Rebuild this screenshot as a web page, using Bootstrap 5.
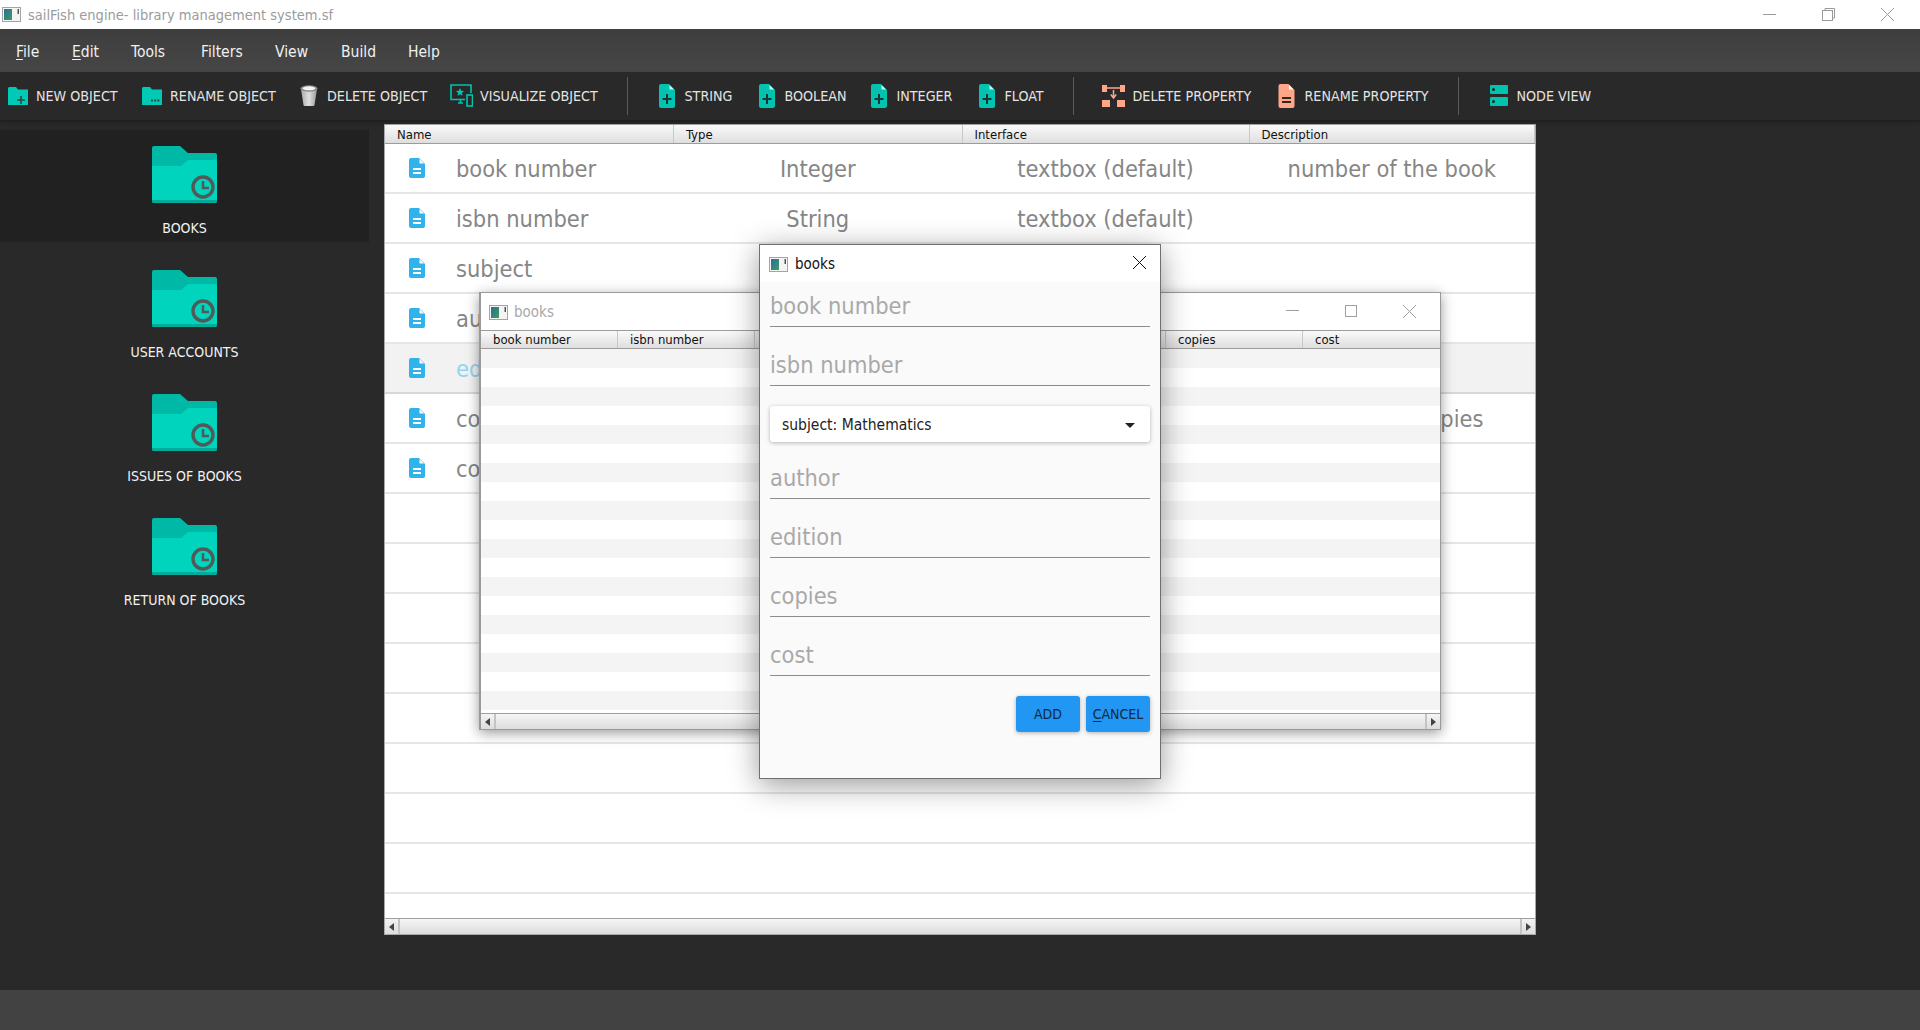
<!DOCTYPE html>
<html lang="en">
<head>
<meta charset="utf-8">
<title>sailFish engine</title>
<link href="https://cdn.jsdelivr.net/npm/bootstrap@5.3.0/dist/css/bootstrap.min.css" rel="stylesheet">
<style>
html,body{height:1030px;overflow:hidden}
body{position:relative;background:#292929;font-family:"DejaVu Sans","Liberation Sans",sans-serif;font-stretch:condensed;color:#e8e8e8}
input,button{font-stretch:condensed}
u{text-underline-offset:2px}
.titlebar{height:29px;background:#fff;color:#9b9b9b;font-size:14.5px;padding-left:2px}
.titlebar .ttl{margin-left:7px;padding-top:2px}
.winctl{margin-left:auto;padding-right:26px;gap:46px}
.menubar{height:43px;background:linear-gradient(#3e3e3e,#464646);font-size:15.5px;color:#f0f0f0;padding-top:5px}
.m1{margin-left:16px;width:56px}.m2{width:59px}.m3{width:70px}.m4{width:74px}.m5{width:66px}.m6{width:67px}
.toolbar{height:48px;background:#292929;font-size:14.2px;color:#e4e4e4;padding-left:8px;box-shadow:0 2px 3px #1e1e1e;position:relative}
.tool{white-space:nowrap;gap:8px;padding-top:2px}
.tool svg{margin-top:-2px}
.w134{width:134px}.w158{width:158px}.w150{width:150px}.w176{width:176.5px}
.w100{width:100px}.w112{width:112px}.w108{width:108px}.w94{width:94px}.w180{width:180px}.w176b{width:176px}
.g9{gap:9px}.g7{gap:7px}.g10{gap:10px}
.vsep{width:1px;height:38px;background:#5a5a5a}
.sp33{margin-right:31px}.sp29{margin-right:28px}.sp32{margin-right:31px}
.mainarea{height:870px}
.sidebar{width:384px;padding-top:10px}
.sideitem{width:369px;height:112px;margin-bottom:12px;padding-top:16px;font-size:14px;color:#f2f2f2}
.sideitem.on{background:#212121}
.sideitem svg{display:block}
.sideitem div{margin-top:15px}
.listpane{width:1152px;height:811px;margin-top:4px;background:#fff;border:1px solid #a8a8a8}
.tblwrap{flex:1 1 auto;overflow:hidden}
.listtbl{table-layout:fixed;width:100%;margin:0;--bs-table-bg:transparent}
.listtbl th{height:18px;padding:0 0 0 12px;font-weight:400;font-size:13px;line-height:17px;color:#111;background:linear-gradient(#fafafa,#dedede);border-bottom:1px solid #9c9c9c;border-right:1px solid #c8c8c8}
.listtbl td{height:50px;padding:3px 0 0;border-bottom:2px solid #e6e6e6;font-size:23.4px;color:#868686;text-align:center;vertical-align:middle;white-space:nowrap}
.listtbl td:first-child{text-align:left;padding-left:24px}
.listtbl td:first-child svg{margin-right:31px;vertical-align:-1px}
.listtbl tr.hov td{background:#f2f2f2;color:#93d5f0;border-bottom-color:#d8d8d8}
.c1{width:288.5px}.c2{width:288.5px}.c3{width:287px}
.hscroll{height:16px;flex:0 0 16px;background:linear-gradient(#f6f6f6,#dcdcdc);border-top:1px solid #9f9f9f}
.hbtn{width:15px;background:linear-gradient(#f4f4f4,#dddddd);border-right:2px solid #c4c4c4}
.hbtn.rt{border-right:0;border-left:2px solid #c4c4c4;margin-left:auto}
.arrL,.arrR{width:0;height:0;border-top:4px solid transparent;border-bottom:4px solid transparent}
.arrL{border-right:5px solid #444}.arrR{border-left:5px solid #444}
.subwin{position:absolute;left:479px;top:292px;width:962px;height:438px;background:#fff;border:1px solid #9a9a9a;border-left-width:2px;box-shadow:0 3px 12px rgba(0,0,0,.4)}
.subhead{height:37px;color:#a8a8a8;font-size:15px;padding:1px 0 0 8px;gap:6px}
.subctl{margin-left:auto;gap:46px;padding:0 24px 2px 0}
.gridhead{height:19px;border-top:1px solid #9c9c9c;border-bottom:1px solid #9c9c9c;background:linear-gradient(#fafafa,#dedede);font-size:13px;line-height:18px;color:#111}
.gridhead div{width:137.5px;padding-left:12px;border-right:1px solid #c8c8c8}
.gridbody{height:364px;background:repeating-linear-gradient(#f4f4f4 0,#f4f4f4 19px,#fff 19px,#fff 38px)}
.dlg{position:absolute;left:759px;top:244px;width:402px;height:535px;background:#fafafa;border:1px solid #6f6f6f;box-shadow:0 6px 28px rgba(0,0,0,.4);padding:0 10px}
.dlghead{height:37px;margin:0 -10px;background:#fff;color:#111;font-size:15px;padding:1px 14px 0 9px;gap:7px}
.dlgx{margin-bottom:3px}
.dlg .form-control{height:45px;padding:3px 0 0;border:0;border-bottom:1px solid #8c8c8c;border-radius:0;background:transparent;font-size:23.4px;color:#888;box-shadow:none}
.dlg .form-control::placeholder{color:#a9a9a9;opacity:1}
.mt14{margin-top:14px}.mt12{margin-top:12px}.mt20{margin-top:20px}
.combo{height:36px;width:100%;background:#fff;border:0;border-radius:3px;font-size:15.5px;color:#222;padding:3px 12px 0;box-shadow:0 1px 4px rgba(0,0,0,.28)}
.combo:hover,.combo:active{background:#fff;color:#222}
.combo::after{border-top-width:.36em;border-left-width:.36em;border-right-width:.36em;margin-right:3px}
.btnrow{gap:6px}
.btnmat{width:64px;height:36px;padding:1px 0 0;background:#2196f3;border:0;border-radius:3px;font-size:14px;color:#0e2a44;box-shadow:0 1px 4px rgba(0,0,0,.3)}
.statusbar{height:40px;background:#424242}
</style>
</head>
<body>
<svg width="0" height="0" class="d-block">
<defs>
<linearGradient id="gApp" x1="0" y1="0" x2="1" y2="1"><stop offset="0" stop-color="#2a6f9a"/><stop offset="1" stop-color="#3f9a5f"/></linearGradient>
<symbol id="appi" viewBox="0 0 19 15"><rect x=".5" y=".5" width="18" height="14" fill="#f4f4f4" stroke="#a4a4a4"/><rect x="2" y="2" width="8" height="11" fill="url(#gApp)"/><rect x="15.5" y="2" width="1.5" height="5" fill="#555"/></symbol>
<symbol id="fold" viewBox="0 0 65 57"><path d="M2 0H28L36 7H63a2 2 0 0 1 2 2V30H0V2a2 2 0 0 1 2-2z" fill="#00b8a6"/><path d="M0 20H29L36 14H63a2 2 0 0 1 2 2V55a2 2 0 0 1-2 2H2a2 2 0 0 1-2-2z" fill="#00d4bd"/><path d="M0 55a2 2 0 0 0 2 2H63a2 2 0 0 0 2-2V54H0z" fill="#00ab99"/><circle cx="51" cy="41" r="10" fill="none" stroke="#505a58" stroke-width="3.4"/><path d="M51 35V42H57" fill="none" stroke="#505a58" stroke-width="2.6"/></symbol>
<symbol id="doc" viewBox="0 0 16 20"><path d="M2 0H10L16 6V18a2 2 0 0 1-2 2H2a2 2 0 0 1-2-2V2a2 2 0 0 1 2-2z" fill="#2fb3ea"/><path d="M10.5 1V5.5H15z" fill="#fff"/><path d="M4 11H12M4 15H12" stroke="#fff" stroke-width="1.8"/></symbol>
<symbol id="docadd" viewBox="0 0 16 24"><path d="M2 0H10L16 6V22a2 2 0 0 1-2 2H2a2 2 0 0 1-2-2V2a2 2 0 0 1 2-2z" fill="#00c4b0"/><path d="M10.5 1V5.5H15z" fill="#bff"/><path d="M8 10V20M3.500 15H12.500" stroke="#1c3533" stroke-width="2"/></symbol>
<symbol id="folda" viewBox="0 0 20 18"><path d="M1 0H8L10 2.500H20V18H0V1z" fill="#00c9b5"/><path d="M13 9V17M9 13H17" stroke="#2a4a46" stroke-width="1.600"/></symbol>
<symbol id="foldr" viewBox="0 0 20 18"><path d="M1 0H8L10 2.500H20V18H0V1z" fill="#00c9b5"/><path d="M9 13.500h2M12.200 13.500h2M15.400 13.500h2" stroke="#2a4a46" stroke-width="1.800"/></symbol>
</defs>
</svg>

<header class="titlebar d-flex align-items-center">
  <svg width="19" height="15"><use href="#appi"/></svg>
  <span class="ttl">sailFish engine- library management system.sf</span>
  <div class="winctl d-flex align-items-center">
    <svg width="13" height="13"><path d="M0 6.500H13" stroke="#9a9a9a"/></svg>
    <svg width="13" height="13" fill="none" stroke="#9a9a9a"><path d="M3 2.500V.5H12.500V10H10.500"/><rect x=".5" y="2.500" width="10" height="10"/></svg>
    <svg width="13" height="13"><path d="M0 0L13 13M13 0L0 13" stroke="#9a9a9a"/></svg>
  </div>
</header>

<nav class="menubar d-flex align-items-center">
  <span class="m1"><u>F</u>ile</span><span class="m2"><u>E</u>dit</span><span class="m3">Tools</span><span class="m4">Filters</span><span class="m5">View</span><span class="m6">Build</span><span>Help</span>
</nav>

<div class="toolbar d-flex align-items-center">
  <div class="tool d-flex align-items-center w134"><svg width="20" height="18"><use href="#folda"/></svg>NEW OBJECT</div>
  <div class="tool d-flex align-items-center w158"><svg width="20" height="18"><use href="#foldr"/></svg>RENAME OBJECT</div>
  <div class="tool g9 d-flex align-items-center w150">
    <svg width="18" height="21" viewBox="0 0 18 21"><defs><linearGradient id="gT" x1="0" x2="1"><stop offset="0" stop-color="#aaa"/><stop offset=".5" stop-color="#e0e0e0"/><stop offset="1" stop-color="#999"/></linearGradient></defs><path d="M1 4L3.500 20a1.500 1 0 0 0 1.500 1H13a1.500 1 0 0 0 1.500-1L17 4z" fill="url(#gT)"/><ellipse cx="9" cy="3.500" rx="8.500" ry="3.200" fill="#8a8a8a"/><ellipse cx="9" cy="3.300" rx="6.500" ry="2" fill="#f4f4f4"/></svg>DELETE OBJECT</div>
  <div class="tool g7 d-flex align-items-center w176">
    <svg width="23" height="24" viewBox="0 0 23 24" fill="none" stroke="#00c4b0" stroke-width="1.600"><path d="M15 15.500H1V1H21V9"/><path d="M8 19H13M10.500 16V19"/><rect x="17" y="11" width="5.500" height="11"/><path d="M10 4l1.200 2.700 2.800.3-2.100 1.900.6 2.800-2.500-1.400-2.500 1.400.6-2.800L6 7l2.800-.3z" fill="#00c4b0" stroke="none"/></svg>VISUALIZE OBJECT</div>
  <div class="vsep sp33"></div>
  <div class="tool g10 d-flex align-items-center w100"><svg width="16" height="24"><use href="#docadd"/></svg>STRING</div>
  <div class="tool g10 d-flex align-items-center w112"><svg width="16" height="24"><use href="#docadd"/></svg>BOOLEAN</div>
  <div class="tool g10 d-flex align-items-center w108"><svg width="16" height="24"><use href="#docadd"/></svg>INTEGER</div>
  <div class="tool g10 d-flex align-items-center w94"><svg width="16" height="24"><use href="#docadd"/></svg>FLOAT</div>
  <div class="vsep sp29"></div>
  <div class="tool d-flex align-items-center w176b">
    <svg width="23" height="24" viewBox="0 0 23 24" fill="#ffa68a"><rect x="0" y="1" width="5" height="7"/><rect x="18" y="1" width="5" height="7"/><rect x="0" y="16" width="8" height="7"/><rect x="15" y="16" width="8" height="7"/><path d="M5 4H18" stroke="#ffa68a" stroke-width="1.500"/><path d="M11.500 6V13M8.800 10.500L11.500 14 14.200 10.500" fill="none" stroke="#ffa68a" stroke-width="1.500"/></svg>DELETE PROPERTY</div>
  <div class="tool g10 d-flex align-items-center w180">
    <svg width="17" height="24" viewBox="0 0 16 24"><path d="M2 0H10L16 6V22a2 2 0 0 1-2 2H2a2 2 0 0 1-2-2V2a2 2 0 0 1 2-2z" fill="#ffa68a"/><path d="M10.500 1V5.500H15z" fill="#ffe"/><path d="M3.500 14H12.500M3.500 18H12.500" stroke="#33261f" stroke-width="1.800"/></svg>RENAME PROPERTY</div>
  <div class="vsep sp32"></div>
  <div class="tool g9 d-flex align-items-center">
    <svg width="18" height="21" viewBox="0 0 18 21"><rect width="18" height="9" rx="1" fill="#00c4b0"/><rect y="12" width="18" height="9" rx="1" fill="#00c4b0"/><circle cx="3.500" cy="4.500" r="1.500" fill="#222"/><circle cx="3.500" cy="16.500" r="1.500" fill="#222"/></svg>NODE VIEW</div>
</div>

<main class="mainarea d-flex">
  <aside class="sidebar">
    <div class="sideitem on d-flex flex-column align-items-center"><svg width="65" height="57"><use href="#fold"/></svg><div>BOOKS</div></div>
    <div class="sideitem d-flex flex-column align-items-center"><svg width="65" height="57"><use href="#fold"/></svg><div>USER ACCOUNTS</div></div>
    <div class="sideitem d-flex flex-column align-items-center"><svg width="65" height="57"><use href="#fold"/></svg><div>ISSUES OF BOOKS</div></div>
    <div class="sideitem d-flex flex-column align-items-center"><svg width="65" height="57"><use href="#fold"/></svg><div>RETURN OF BOOKS</div></div>
  </aside>

  <section class="listpane d-flex flex-column">
    <div class="tblwrap">
      <table class="table listtbl">
        <thead><tr><th class="c1">Name</th><th class="c2">Type</th><th class="c3">Interface</th><th>Description</th></tr></thead>
        <tbody>
          <tr><td><svg width="16" height="20"><use href="#doc"/></svg>book number</td><td>Integer</td><td>textbox (default)</td><td>number of the book</td></tr>
          <tr><td><svg width="16" height="20"><use href="#doc"/></svg>isbn number</td><td>String</td><td>textbox (default)</td><td></td></tr>
          <tr><td><svg width="16" height="20"><use href="#doc"/></svg>subject</td><td></td><td></td><td></td></tr>
          <tr><td><svg width="16" height="20"><use href="#doc"/></svg>author</td><td></td><td></td><td></td></tr>
          <tr class="hov"><td><svg width="16" height="20"><use href="#doc"/></svg>edition</td><td></td><td></td><td></td></tr>
          <tr><td><svg width="16" height="20"><use href="#doc"/></svg>copies</td><td></td><td></td><td>number of copies</td></tr>
          <tr><td><svg width="16" height="20"><use href="#doc"/></svg>cost</td><td></td><td></td><td></td></tr>
          <tr><td></td><td></td><td></td><td></td></tr>
          <tr><td></td><td></td><td></td><td></td></tr>
          <tr><td></td><td></td><td></td><td></td></tr>
          <tr><td></td><td></td><td></td><td></td></tr>
          <tr><td></td><td></td><td></td><td></td></tr>
          <tr><td></td><td></td><td></td><td></td></tr>
          <tr><td></td><td></td><td></td><td></td></tr>
          <tr><td></td><td></td><td></td><td></td></tr>
          <tr><td></td><td></td><td></td><td></td></tr>
        </tbody>
      </table>
    </div>
    <div class="hscroll d-flex">
      <div class="hbtn d-flex align-items-center justify-content-center"><span class="arrL"></span></div>
      <div class="hbtn rt d-flex align-items-center justify-content-center"><span class="arrR"></span></div>
    </div>
  </section>
</main>

<footer class="statusbar"></footer>

<section class="subwin d-flex flex-column">
  <div class="subhead d-flex align-items-center">
    <svg width="19" height="15"><use href="#appi"/></svg><span>books</span>
    <div class="subctl d-flex align-items-center">
      <svg width="13" height="13"><path d="M0 5.500H13" stroke="#a0a0a0"/></svg>
      <svg width="12" height="12"><rect x=".5" y=".5" width="11" height="11" fill="none" stroke="#a0a0a0"/></svg>
      <svg width="13" height="13"><path d="M0 0L13 13M13 0L0 13" stroke="#a0a0a0"/></svg>
    </div>
  </div>
  <div class="gridhead d-flex">
    <div>book number</div><div>isbn number</div><div>subject</div><div>author</div><div>edition</div><div>copies</div><div class="border-0">cost</div>
  </div>
  <div class="gridbody"></div>
  <div class="hscroll d-flex">
    <div class="hbtn d-flex align-items-center justify-content-center"><span class="arrL"></span></div>
    <div class="hbtn rt d-flex align-items-center justify-content-center"><span class="arrR"></span></div>
  </div>
</section>

<section class="dlg">
  <div class="dlghead d-flex align-items-center">
    <svg width="19" height="15"><use href="#appi"/></svg><span>books</span>
    <svg class="ms-auto dlgx" width="13" height="13"><path d="M0 0L13 13M13 0L0 13" stroke="#111"/></svg>
  </div>
  <form>
    <input class="form-control" type="text" placeholder="book number">
    <input class="form-control mt14" type="text" placeholder="isbn number">
    <button type="button" class="btn combo dropdown-toggle d-flex justify-content-between align-items-center mt20">subject: Mathematics</button>
    <input class="form-control mt12" type="text" placeholder="author">
    <input class="form-control mt14" type="text" placeholder="edition">
    <input class="form-control mt14" type="text" placeholder="copies">
    <input class="form-control mt14" type="text" placeholder="cost">
    <div class="d-flex justify-content-end btnrow mt20">
      <button type="button" class="btn btnmat">ADD</button>
      <button type="button" class="btn btnmat"><u>C</u>ANCEL</button>
    </div>
  </form>
</section>

<script src="https://cdn.jsdelivr.net/npm/bootstrap@5.3.0/dist/js/bootstrap.bundle.min.js"></script>
</body>
</html>
